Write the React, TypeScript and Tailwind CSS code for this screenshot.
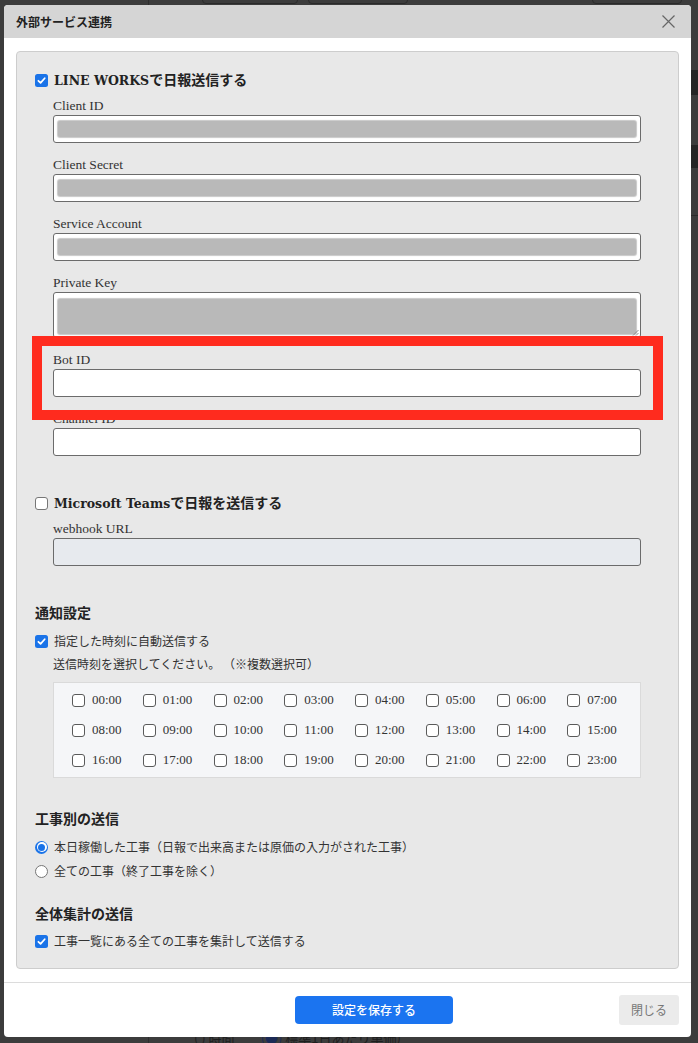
import React from "react";

const SERIF = "font-['Liberation_Serif','Noto_Sans_CJK_JP',serif]";
const SANS = "font-['Noto_Sans_CJK_JP','Noto_Sans',sans-serif]";

function Check({ checked, dark }: { checked?: boolean; dark?: boolean }) {
  if (checked) {
    return (
      <span className="flex h-[13px] w-[13px] shrink-0 items-center justify-center rounded-[2.5px] bg-[#1a73e8]">
        <svg viewBox="0 0 12 12" className="h-[11px] w-[11px]">
          <path
            d="M2.6 6.3 L5 8.6 L9.5 3.5"
            fill="none"
            stroke="white"
            strokeWidth="1.9"
            strokeLinecap="round"
            strokeLinejoin="round"
          />
        </svg>
      </span>
    );
  }
  return (
    <span
      className={
        "h-[13px] w-[13px] shrink-0 rounded-[3px] border bg-white " +
        (dark ? "border-[#5a5a5a]" : "border-[#767676]")
      }
    />
  );
}

function Radio({ checked }: { checked?: boolean }) {
  if (checked) {
    return (
      <span className="flex h-[13px] w-[13px] shrink-0 items-center justify-center rounded-full bg-[#1a73e8]">
        <span className="flex h-[10px] w-[10px] items-center justify-center rounded-full bg-white">
          <span className="h-[7px] w-[7px] rounded-full bg-[#1a73e8]" />
        </span>
      </span>
    );
  }
  return <span className="h-[13px] w-[13px] shrink-0 rounded-full border border-[#767676] bg-white" />;
}

function Label({ children }: { children: React.ReactNode }) {
  return <div className={`${SERIF} h-[18px] text-[13.5px] leading-[18px] text-[#333]`}>{children}</div>;
}

function Redact() {
  return <div className="h-full w-full rounded-[2px] bg-[#b9b9b9] shadow-[0_0_1px_1px_#c8c8c8]" />;
}

function Field({
  label,
  redacted,
  last,
}: {
  label: string;
  redacted?: boolean;
  last?: boolean;
}) {
  return (
    <div className={last ? "" : "mb-[13px]"}>
      <Label>{label}</Label>
      <div className="h-[28px] rounded-[3px] border border-[#6b6b6b] bg-white px-[4px] py-[5px]">
        {redacted && <Redact />}
      </div>
    </div>
  );
}

const times = Array.from({ length: 24 }, (_, i) => `${String(i).padStart(2, "0")}:00`);

export default function App() {
  return (
    <div className="relative h-[1043px] w-[698px] overflow-hidden bg-[#3c3c3c]">
      {/* page behind the overlay */}
      <div className="absolute left-[148px] top-0 h-full w-[1px] bg-[#2e2e2e]" />
      <div className="absolute left-[202px] top-[-12px] h-[16px] w-[96px] rounded-[4px] border border-[#2a2a2a]" />
      <div className="absolute left-[308px] top-[-12px] h-[16px] w-[100px] rounded-[4px] border border-[#2a2a2a]" />
      <div className="absolute left-[592px] top-[-12px] h-[16px] w-[90px] rounded-[4px] border border-[#2a2a2a]" />
      <div className="absolute right-0 top-[70px] h-[25px] w-[8px] bg-[#252525]" />
      <div className="absolute right-0 top-[145px] h-[23px] w-[8px] bg-[#252525]" />
      <div className="absolute right-0 top-[215px] h-[1px] w-[8px] bg-[#2a2a2a]" />
      <div className={`${SANS} absolute left-[194px] top-[1029px] text-[13px] leading-[18px] text-[#1e1e1e]`}>
        ( ) 時間　　<span className="text-[#1c2a55]">(●)</span> 標準1日あたり単価)
      </div>

      <div className="relative pl-[4px] pt-[5px]">
        <div className="flex h-[1032px] w-[687px] flex-col overflow-hidden rounded-[4px] bg-white">
          {/* header */}
          <div className="flex h-[33px] shrink-0 items-center justify-between bg-[#d5d5d5] pl-[12px] pr-[16px]">
            <span className={`${SANS} text-[12px] font-bold text-[#222]`}>外部サービス連携</span>
            <svg viewBox="0 0 13 13" className="h-[13px] w-[13px]">
              <path d="M0.5 0.5 L12.5 12.5 M12.5 0.5 L0.5 12.5" stroke="#666" strokeWidth="1.2" fill="none" />
            </svg>
          </div>

          {/* body */}
          <div className="shrink-0 px-[12px] pb-[13px] pt-[13px]">
            <div className="rounded-[4px] border border-[#cdcdcd] bg-[#e8e8e8] pb-[18px] pl-[18px] pr-[18px] pt-[18px]">
              {/* LINE WORKS */}
              <div className="flex h-[20px] items-center gap-[6px]">
                <Check checked />
                <span className={`${SANS} text-[14px] font-bold text-[#222]`}>
                  <span className="font-['DejaVu_Serif'] text-[12.5px]">LINE WORKS</span>で日報送信する
                </span>
              </div>
              <div className="ml-[18px] mt-[7px] w-[588px]">
                <Field label="Client ID" redacted />
                <Field label="Client Secret" redacted />
                <Field label="Service Account" redacted />
                <div className="mb-[13px]">
                  <Label>Private Key</Label>
                  <div className="relative h-[46px] rounded-[3px] border border-[#6b6b6b] bg-white px-[4px] pb-[3px] pt-[6px]">
                    <Redact />
                    <svg viewBox="0 0 7 7" className="absolute bottom-[1px] right-[1px] h-[7px] w-[7px]">
                      <path d="M6.5 1 L1 6.5 M6.5 4 L4 6.5" stroke="#777" strokeWidth="0.8" fill="none" />
                    </svg>
                  </div>
                </div>
                <div className="relative mb-[13px]">
                  <Label>Bot ID</Label>
                  <div className="h-[28px] rounded-[3px] border border-[#6b6b6b] bg-white" />
                  <div className="pointer-events-none absolute bottom-[-23px] left-[-21px] right-[-22px] top-[-15px] z-10 border-[10px] border-[#ff2b1e]" />
                </div>
                <Field label="Channel ID" last />
              </div>

              {/* Microsoft Teams */}
              <div className="mt-[37px] flex h-[20px] items-center gap-[6px]">
                <Check />
                <span className={`${SANS} text-[14px] font-bold text-[#222]`}>
                  <span className="font-['DejaVu_Serif'] text-[12.5px]">Microsoft Teams</span>で日報を送信する
                </span>
              </div>
              <div className="ml-[18px] mt-[7px] w-[588px]">
                <Label>webhook URL</Label>
                <div className="h-[28px] rounded-[3px] border border-[#6b6b6b] bg-[#e7eaee]" />
              </div>

              {/* 通知設定 */}
              <div className={`${SANS} mt-[36px] h-[20px] text-[14px] font-bold leading-[20px] text-[#222]`}>通知設定</div>
              <div className="mt-[10px] flex h-[18px] items-center gap-[6px]">
                <Check checked />
                <span className={`${SANS} text-[12px] text-[#333]`}>指定した時刻に自動送信する</span>
              </div>
              <div className={`${SANS} ml-[18px] mt-[5px] h-[18px] text-[12px] leading-[18px] text-[#333]`}>
                送信時刻を選択してください。 （※複数選択可）
              </div>
              <div className="ml-[18px] mt-[9px] grid w-[588px] grid-cols-8 gap-y-[10px] border border-[#dadada] bg-[#f5f6f8] py-[7px] pl-[18px] pr-[2px]">
                {times.map((t) => (
                  <div key={t} className="flex h-[20px] items-center gap-[7px]">
                    <Check dark />
                    <span className={`${SERIF} text-[13px] text-[#333]`}>{t}</span>
                  </div>
                ))}
              </div>

              {/* 工事別の送信 */}
              <div className={`${SANS} mt-[30px] h-[20px] text-[14px] font-bold leading-[20px] text-[#222]`}>工事別の送信</div>
              <div className="mt-[10px] flex h-[18px] items-center gap-[6px]">
                <Radio checked />
                <span className={`${SANS} text-[12px] text-[#333]`}>
                  本日稼働した工事（日報で出来高または原価の入力がされた工事）
                </span>
              </div>
              <div className="mt-[6px] flex h-[18px] items-center gap-[6px]">
                <Radio />
                <span className={`${SANS} text-[12px] text-[#333]`}>全ての工事（終了工事を除く）</span>
              </div>

              {/* 全体集計の送信 */}
              <div className={`${SANS} mt-[23px] h-[20px] text-[14px] font-bold leading-[20px] text-[#222]`}>全体集計の送信</div>
              <div className="mt-[9px] flex h-[18px] items-center gap-[6px]">
                <Check checked />
                <span className={`${SANS} text-[12px] text-[#333]`}>工事一覧にある全ての工事を集計して送信する</span>
              </div>
            </div>
          </div>

          {/* footer */}
          <div className="flex flex-1 items-center border-t border-[#dcdcdc] px-[12px]">
            <button className={`${SANS} ml-[279px] h-[28px] w-[158px] rounded-[4px] bg-[#1b74f0] text-[12px] font-medium text-white`}>
              設定を保存する
            </button>
            <button className={`${SANS} ml-auto h-[30px] w-[60px] rounded-[3px] bg-[#ebebeb] text-[12px] text-[#777]`}>
              閉じる
            </button>
          </div>
        </div>
      </div>
    </div>
  );
}
